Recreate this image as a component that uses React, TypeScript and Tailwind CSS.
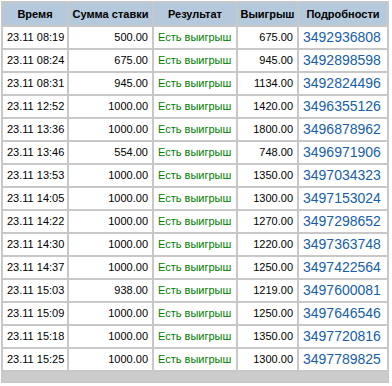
import React from "react";

const rows: [string, string, string, string][] = [
  ["23.11 08:19", "500.00", "675.00", "3492936808"],
  ["23.11 08:24", "675.00", "945.00", "3492898598"],
  ["23.11 08:31", "945.00", "1134.00", "3492824496"],
  ["23.11 12:52", "1000.00", "1420.00", "3496355126"],
  ["23.11 13:36", "1000.00", "1800.00", "3496878962"],
  ["23.11 13:46", "554.00", "748.00", "3496971906"],
  ["23.11 13:53", "1000.00", "1350.00", "3497034323"],
  ["23.11 14:05", "1000.00", "1300.00", "3497153024"],
  ["23.11 14:22", "1000.00", "1270.00", "3497298652"],
  ["23.11 14:30", "1000.00", "1220.00", "3497363748"],
  ["23.11 14:37", "1000.00", "1250.00", "3497422564"],
  ["23.11 15:03", "938.00", "1219.00", "3497600081"],
  ["23.11 15:09", "1000.00", "1250.00", "3497646546"],
  ["23.11 15:18", "1000.00", "1350.00", "3497720816"],
  ["23.11 15:25", "1000.00", "1300.00", "3497789825"],
];

const th = "bg-[#b4c9dc] h-[22px] p-0 text-center font-bold text-black";
const td = "bg-white h-[21px] p-0";

export default function App() {
  return (
    <div className="bg-white w-[392px] h-[386px] pt-[3px] pl-[3px] font-['Liberation_Sans',Arial,sans-serif] text-[11px] text-black">
      <table className="border-separate border-spacing-[2px] bg-[#c8c8c8] -m-[2px] table-fixed">
        <thead>
          <tr>
            <th className={`${th} w-[64px]`}>Время</th>
            <th className={`${th} w-[83px]`}>Сумма ставки</th>
            <th className={`${th} w-[82px]`}>Результат</th>
            <th className={`${th} w-[59px]`}>Выигрыш</th>
            <th className={`${th} w-[88px]`}>Подробности</th>
          </tr>
        </thead>
        <tbody>
          {rows.map(([time, stake, win, id]) => (
            <tr key={id}>
              <td className={`${td} pl-[4px] text-left`}>{time}</td>
              <td className={`${td} pr-[4px] text-right`}>{stake}</td>
              <td className={`${td} pl-[4px] text-left text-[#008000]`}>Есть выигрыш</td>
              <td className={`${td} pr-[4px] text-right`}>{win}</td>
              <td className={`${td} pl-[4px] text-left`}>
                <a href="#" className="text-[14px] text-[#1760a8] no-underline">
                  {id}
                </a>
              </td>
            </tr>
          ))}
        </tbody>
        <tfoot>
          <tr>
            <td colSpan={5} className="bg-[#cccccc] h-[9px] p-0" />
          </tr>
        </tfoot>
      </table>
    </div>
  );
}
